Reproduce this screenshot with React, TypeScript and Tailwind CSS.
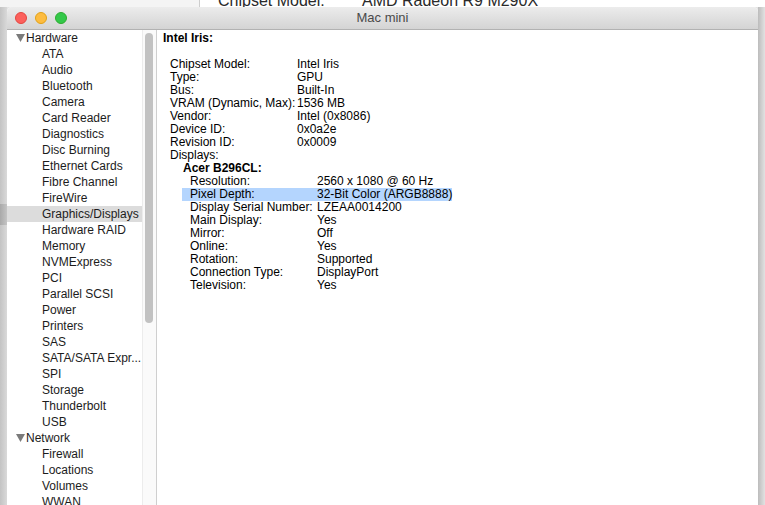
const font = { fontFamily: '"Liberation Sans", Arial, sans-serif' };

type Item = { label: string; level: 0 | 1 };

const sidebar: Item[] = [
  { label: "Hardware", level: 0 },
  ...[
    "ATA",
    "Audio",
    "Bluetooth",
    "Camera",
    "Card Reader",
    "Diagnostics",
    "Disc Burning",
    "Ethernet Cards",
    "Fibre Channel",
    "FireWire",
    "Graphics/Displays",
    "Hardware RAID",
    "Memory",
    "NVMExpress",
    "PCI",
    "Parallel SCSI",
    "Power",
    "Printers",
    "SAS",
    "SATA/SATA Expr...",
    "SPI",
    "Storage",
    "Thunderbolt",
    "USB",
  ].map((label) => ({ label, level: 1 as const })),
  { label: "Network", level: 0 },
  ...["Firewall", "Locations", "Volumes", "WWAN"].map((label) => ({
    label,
    level: 1 as const,
  })),
];

const gpu: [string, string][] = [
  ["Chipset Model:", "Intel Iris"],
  ["Type:", "GPU"],
  ["Bus:", "Built-In"],
  ["VRAM (Dynamic, Max):", "1536 MB"],
  ["Vendor:", "Intel (0x8086)"],
  ["Device ID:", "0x0a2e"],
  ["Revision ID:", "0x0009"],
];

const display: [string, string][] = [
  ["Resolution:", "2560 x 1080 @ 60 Hz"],
  ["Pixel Depth:", "32-Bit Color (ARGB8888)"],
  ["Display Serial Number:", "LZEAA0014200"],
  ["Main Display:", "Yes"],
  ["Mirror:", "Off"],
  ["Online:", "Yes"],
  ["Rotation:", "Supported"],
  ["Connection Type:", "DisplayPort"],
  ["Television:", "Yes"],
];

function Triangle() {
  return (
    <svg width="9" height="8" viewBox="0 0 9 8" className="mr-[1px]">
      <path d="M0 0 H9 L4.5 8 Z" fill="#7b7b7b" />
    </svg>
  );
}

function Sidebar() {
  return (
    <div className="flex w-[150px] shrink-0 border-r border-[#cfcfcf] bg-white">
      <div className="flex-1">
        {sidebar.map((item) => {
          const selected = item.label === "Graphics/Displays";
          return (
            <div
              key={item.label}
              className={`flex h-[16px] items-center whitespace-nowrap text-[12px] text-[#1c1c1c] ${
                selected ? "bg-[#dcdcdc]" : ""
              } ${item.level === 0 ? "pl-[9px]" : "pl-[35px]"}`}
            >
              {item.level === 0 && <Triangle />}
              {item.label}
            </div>
          );
        })}
      </div>
      <div className="w-[14px] shrink-0 border-l border-[#ececec] bg-[#fafafa] pt-[3px] pl-[2px]">
        <div className="h-[290px] w-[8px] rounded-full bg-[#c2c2c2]" />
      </div>
    </div>
  );
}

function Row({
  label,
  value,
  highlight,
}: {
  label: string;
  value: string;
  highlight?: boolean;
}) {
  return (
    <div className="flex h-[13px] items-center">
      <div
        className={`-ml-[8px] flex h-[13px] items-center pl-[8px] ${
          highlight ? "bg-[#b4d5fe]" : ""
        }`}
      >
        <span className="w-[127px] shrink-0">{label}</span>
        <span>{value}</span>
      </div>
    </div>
  );
}

function Content() {
  return (
    <div className="flex-1 bg-white pl-[6px] pt-[2px] text-[12px] leading-[13px] text-black">
      <div className="h-[13px] font-bold">Intel Iris:</div>
      <div className="h-[13px]" />
      <div className="pl-[7px]">
        {gpu.map(([l, v]) => (
          <Row key={l} label={l} value={v} />
        ))}
        <div className="h-[13px]">Displays:</div>
        <div className="pl-[13px]">
          <div className="h-[13px] font-bold">Acer B296CL:</div>
          <div className="pl-[7px]">
            {display.map(([l, v]) => (
              <Row key={l} label={l} value={v} highlight={l === "Pixel Depth:"} />
            ))}
          </div>
        </div>
      </div>
    </div>
  );
}

export default function App() {
  return (
    <div
      className="relative flex h-[505px] w-[765px] flex-col overflow-hidden bg-[#e4e4e4]"
      style={font}
    >
      {/* window behind */}
      <div className="flex h-[7px] shrink-0 overflow-hidden">
        <div className="w-[200px] border-r border-[#cdcdcd] bg-[#f4f4f4]" />
        <div className="relative flex-1 bg-white">
          <div className="absolute left-[18px] top-[-11px] flex whitespace-nowrap text-[16px] text-[#2a2a2a]">
            <span className="w-[144px]">Chipset Model:</span>
            <span>AMD Radeon R9 M290X</span>
          </div>
        </div>
      </div>

      <div className="flex flex-1">
        <div className="flex w-[7px] shrink-0 flex-col bg-gradient-to-r from-[#c3c3c3] to-[#d9d9d9]">
          <div className="h-[197px]" />
          <div className="h-[21px] bg-gradient-to-r from-[#a9a9a9] to-[#c4c4c4]" />
        </div>

        {/* Mac mini window */}
        <div className="flex w-[751px] shrink-0 flex-col overflow-hidden rounded-t-[5px] bg-white">
          <div className="relative flex h-[23px] shrink-0 items-center justify-center border-b border-[#b2b2b2] bg-gradient-to-b from-[#ececec] to-[#d4d4d4]">
            <div className="absolute left-[8px] top-[5px] flex gap-[8px]">
              <span className="h-[12px] w-[12px] rounded-full border border-[#e2463f] bg-[#fc605c]" />
              <span className="h-[12px] w-[12px] rounded-full border border-[#e1a116] bg-[#fdbc40]" />
              <span className="h-[12px] w-[12px] rounded-full border border-[#2dac2f] bg-[#34c84a]" />
            </div>
            <span className="text-[13px] text-[#4a4a4a]">Mac mini</span>
          </div>
          <div className="flex flex-1">
            <Sidebar />
            <Content />
          </div>
        </div>

        <div className="w-[7px] shrink-0 bg-gradient-to-r from-[#bcbcbc] to-[#e2e2e2]" />
      </div>
    </div>
  );
}
